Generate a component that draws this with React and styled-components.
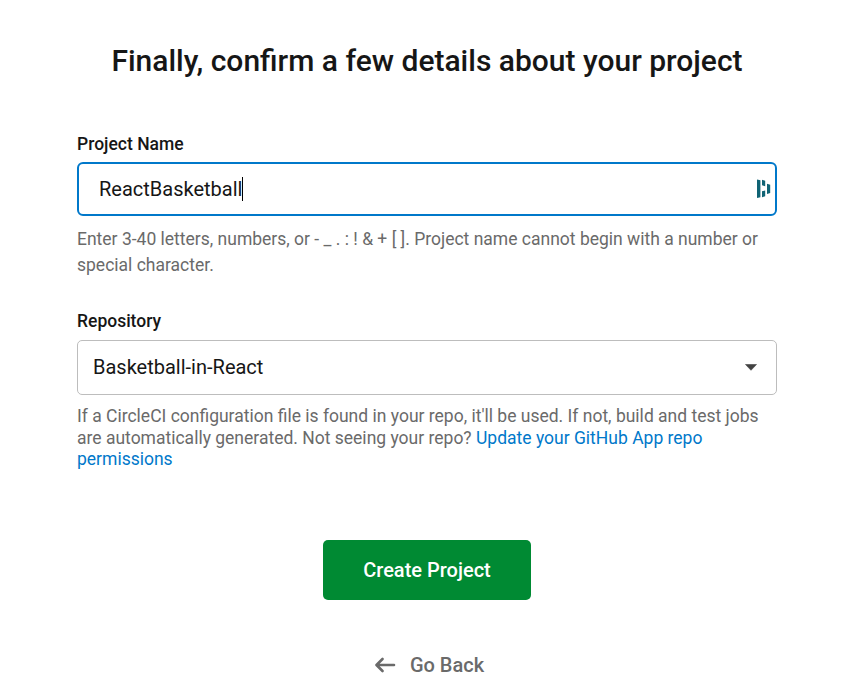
import React from "react";
import styled, { createGlobalStyle } from "styled-components";

const GlobalStyle = createGlobalStyle`
  * { box-sizing: border-box; }
  body { margin: 0; background: #fff; font-family: Roboto, "Liberation Sans", sans-serif; color: #161616; }
`;
const Page = styled.main`
  width: 863px;
  height: 691px;
  padding: 41px 86px 0 77px;
  display: flex;
  flex-direction: column;
  overflow: hidden;
`;
const Title = styled.h1`
  margin: 0;
  text-align: center;
  font-size: 30px;
  line-height: 40px;
  font-weight: 500;
  white-space: nowrap;
`;
const Field = styled.section`
  display: flex;
  flex-direction: column;
  margin-top: ${(p) => p.$top}px;
`;
const Label = styled.label`
  font-size: 17.5px;
  line-height: 24px;
  font-weight: 500;
`;
const InputBox = styled.div`
  height: 54px;
  margin-top: 6px;
  padding: 0 4px 0 20px;
  border: 2px solid #0078ca;
  border-radius: 6px;
  display: flex;
  align-items: center;
  justify-content: space-between;
  font-size: 20px;
`;
const Typed = styled.span`
  display: flex;
  align-items: center;
`;
const Caret = styled.span`
  width: 1px;
  height: 24px;
  background: #000;
`;
const SelectBox = styled.div`
  height: 55px;
  margin-top: 7px;
  padding: 0 19px 0 15px;
  border: 1px solid #bdbdbd;
  border-radius: 5px;
  display: flex;
  align-items: center;
  justify-content: space-between;
  font-size: 20px;
`;
const Selected = styled.span`
  padding-bottom: 2px;
`;
const Help = styled.p`
  margin: ${(p) => p.$top}px 0 0;
  color: #6a6a6a;
  font-size: 17.5px;
  line-height: ${(p) => p.$line}px;
  white-space: nowrap;
`;
const Link = styled.a`
  color: #0078ca;
`;
const Actions = styled.div`
  display: flex;
  flex-direction: column;
  align-items: center;
  margin-top: 69px;
`;
const CreateButton = styled.button`
  width: 208px;
  height: 60px;
  border: 0;
  border-radius: 5px;
  background: #008a33;
  color: #fff;
  font: 500 20px Roboto, sans-serif;
`;
const BackButton = styled.button`
  margin-top: 51px;
  padding: 0 0 0 5px;
  height: 28px;
  border: 0;
  background: none;
  display: flex;
  align-items: center;
  gap: 14px;
  color: #6a6a6a;
  font: 500 20px Roboto, sans-serif;
`;

export default function App() {
  return (
    <Page>
      <GlobalStyle />
      <Title>Finally, confirm a few details about your project</Title>
      <Field $top={51}>
        <Label>Project Name</Label>
        <InputBox>
          <Typed>ReactBasketball<Caret /></Typed>
          <svg width="14" height="20" viewBox="0 0 14 20" fill="#0f6374">
            <path d="M0 .5L3.400 1.300V18.200L0 19ZM5 .8L8.200 1.800V7.200L5 6.200ZM5 12.300L8.200 11.500V17.300L5 18.300ZM10 4.700L13.200 5.700V14L10 15Z" />
          </svg>
        </InputBox>
        <Help $top={10} $line={26}>
          Enter 3-40 letters, numbers, or - _ . : ! &amp; + [ ]. Project name cannot begin with a number or<br />
          special character.
        </Help>
      </Field>
      <Field $top={31}>
        <Label>Repository</Label>
        <SelectBox>
          <Selected>Basketball-in-React</Selected>
          <svg width="12" height="7" viewBox="0 0 12 7" fill="#424242"><path d="M.5 .5H11.500L6 6.300Z" stroke="#424242" strokeWidth=".6" strokeLinejoin="round" /></svg>
        </SelectBox>
        <Help $top={11} $line={21.6}>
          If a CircleCI configuration file is found in your repo, it'll be used. If not, build and test jobs<br />
          are automatically generated. Not seeing your repo? <Link>Update your GitHub App repo<br />permissions</Link>
        </Help>
      </Field>
      <Actions>
        <CreateButton>Create Project</CreateButton>
        <BackButton>
          <svg width="21" height="16" viewBox="0 0 21 16" fill="none" stroke="#6a6a6a" strokeWidth="2.6" strokeLinecap="round" strokeLinejoin="round">
            <path d="M19 8H1.800M7.500 2L1.500 8L7.500 14" />
          </svg>
          Go Back
        </BackButton>
      </Actions>
    </Page>
  );
}
